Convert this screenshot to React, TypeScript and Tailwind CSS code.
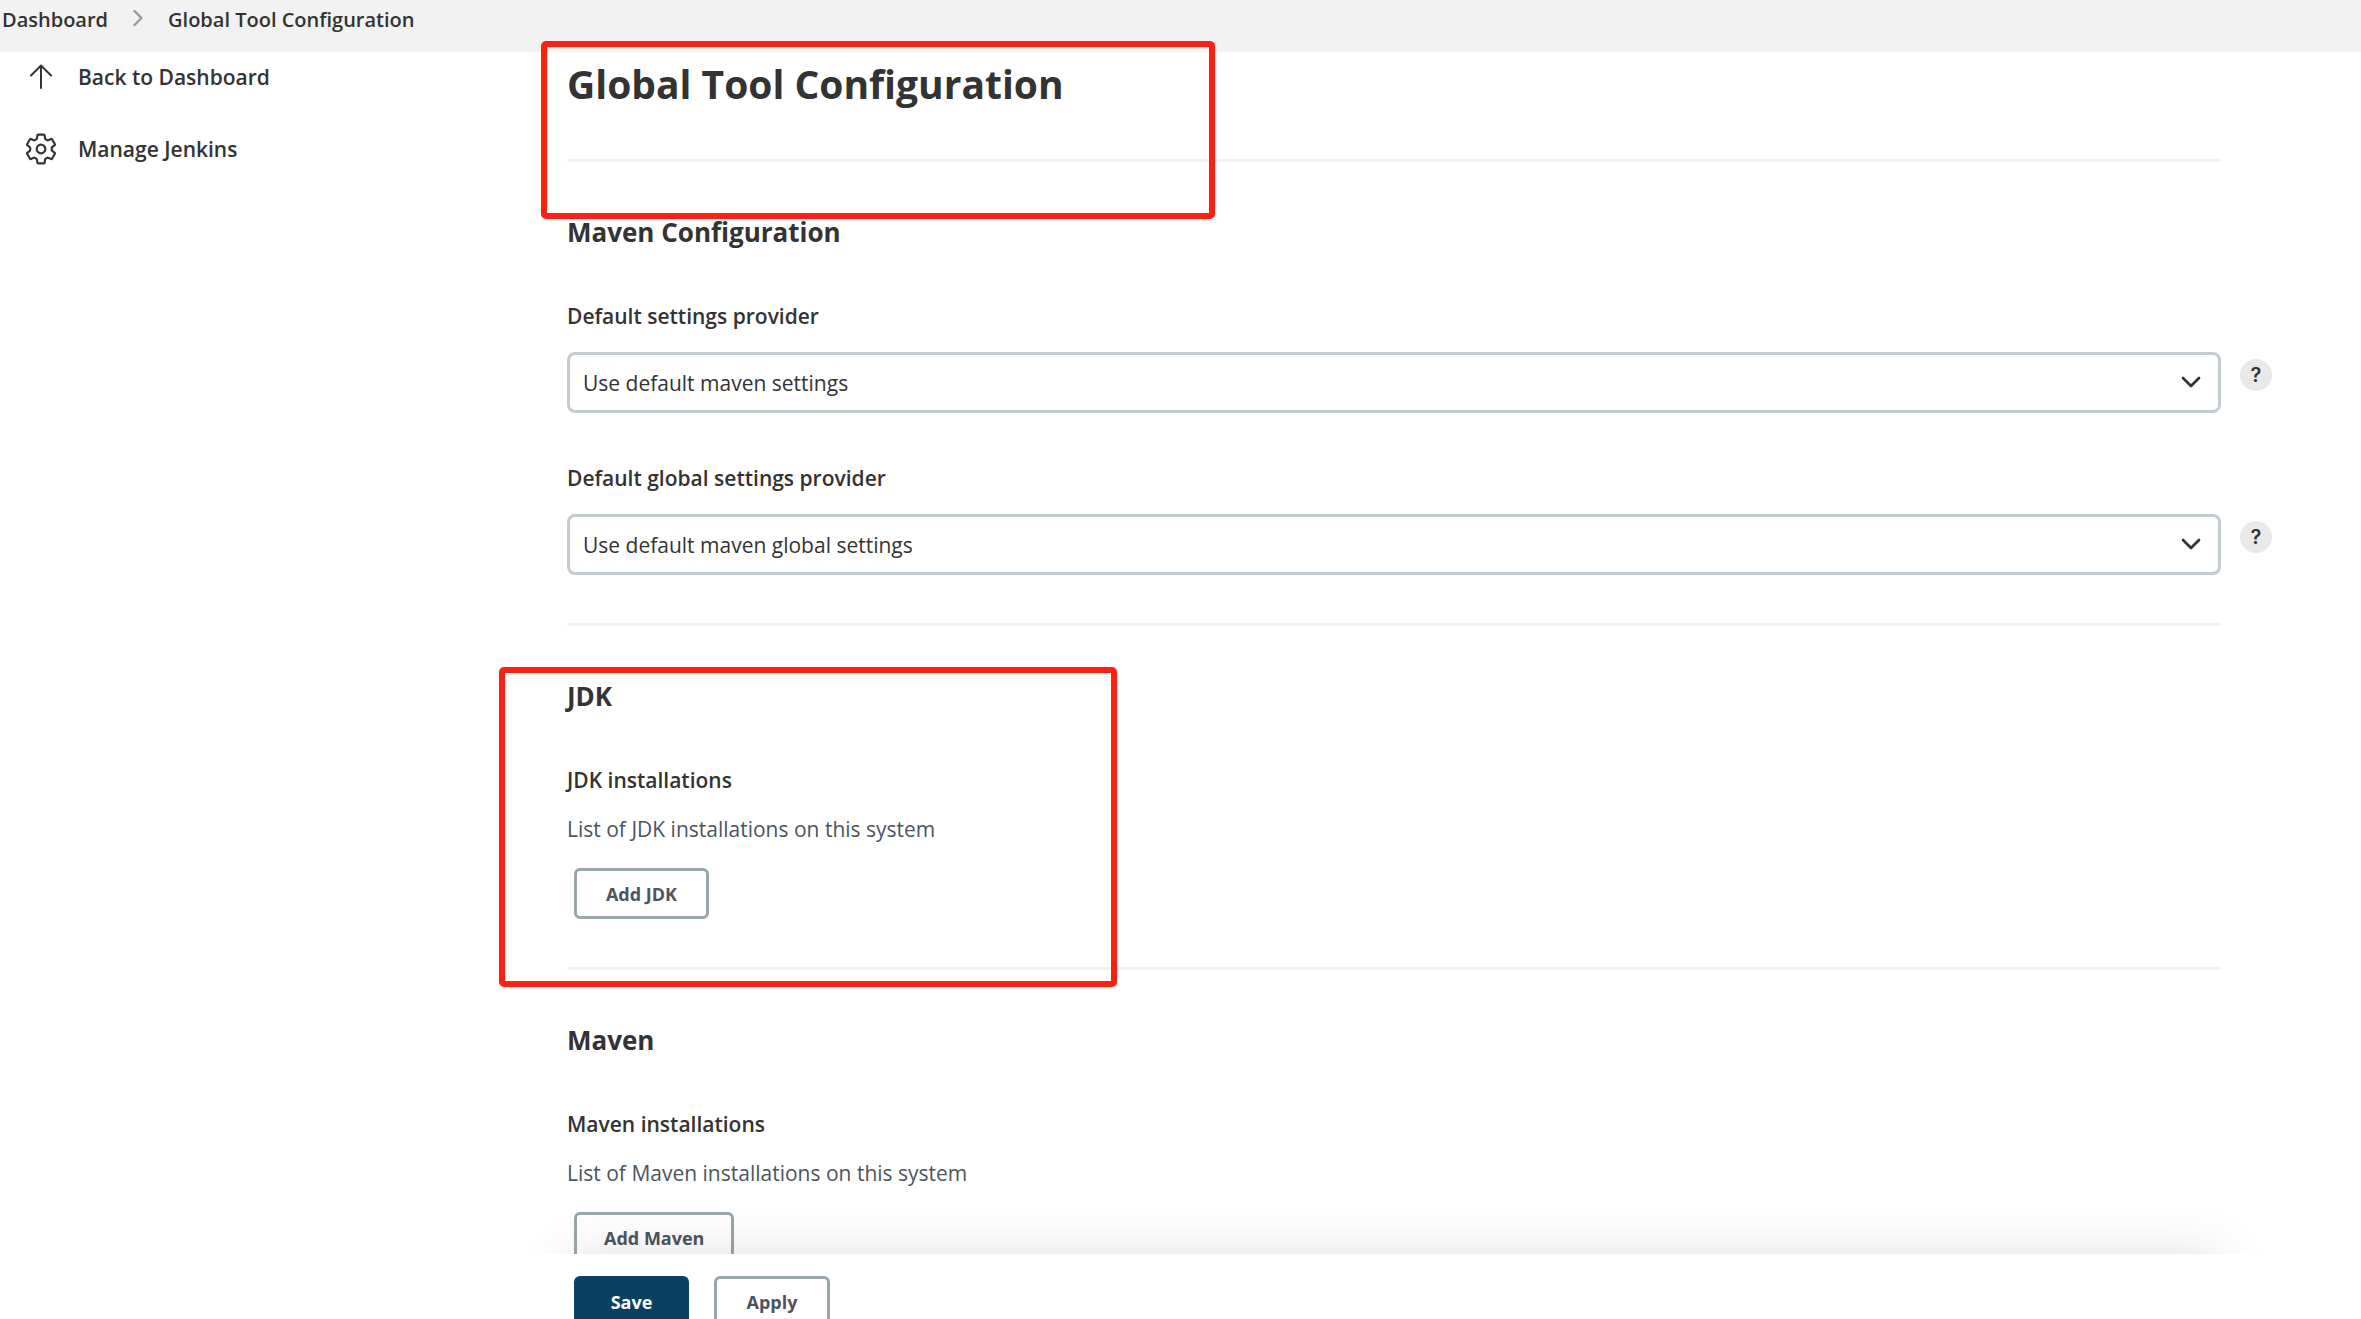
import type { ReactNode } from 'react';
import { ChevronDown, ChevronRight } from 'lucide-react';

type ProviderFieldProps = {
  id: string;
  label: string;
  options: string[];
};

function ArrowUpIcon() {
  return (
    <svg className="h-8 w-8 flex-shrink-0" viewBox="0 0 32 32" fill="none" stroke="currentColor" strokeWidth={2} strokeLinecap="round" strokeLinejoin="round">
      <path d="M16 27V5M6 14.5L16 4.5l10 10" />
    </svg>
  );
}

function GearIcon() {
  return (
    <svg className="h-8 w-8 flex-shrink-0" viewBox="18 18 476 476" fill="none" stroke="currentColor" strokeWidth={32} strokeLinecap="round" strokeLinejoin="round">
      <path d="M262.29 192.31a64 64 0 1057.4 57.4 64.13 64.13 0 00-57.4-57.4zM416.39 256a154.34 154.34 0 01-1.53 20.79l45.21 35.46a10.81 10.81 0 012.45 13.75l-42.77 74a10.81 10.81 0 01-13.14 4.59l-44.9-18.08a16.11 16.11 0 00-15.17 1.75A164.48 164.48 0 01325 400.8a15.94 15.94 0 00-8.82 12.14l-6.73 47.89a11.08 11.08 0 01-10.68 9.17h-85.54a11.11 11.11 0 01-10.69-8.87l-6.72-47.82a16.07 16.07 0 00-9-12.22 155.3 155.3 0 01-21.46-12.57 16 16 0 00-15.11-1.71l-44.89 18.07a10.81 10.81 0 01-13.14-4.58l-42.77-74a10.8 10.8 0 012.45-13.75l38.21-30a16.05 16.05 0 006-14.08c-.36-4.17-.58-8.33-.58-12.5s.21-8.27.58-12.35a16 16 0 00-6.07-13.94l-38.19-30A10.81 10.81 0 0149.48 186l42.77-74a10.81 10.81 0 0113.14-4.59l44.9 18.08a16.11 16.11 0 0015.17-1.75A164.48 164.48 0 01187 111.2a15.94 15.94 0 008.82-12.14l6.73-47.89A11.08 11.08 0 01213.23 42h85.54a11.11 11.11 0 0110.69 8.87l6.72 47.82a16.07 16.07 0 009 12.22 155.3 155.3 0 0121.46 12.57 16 16 0 0015.11 1.71l44.89-18.07a10.81 10.81 0 0113.14 4.58l42.77 74a10.8 10.8 0 01-2.45 13.75l-38.21 30a16.05 16.05 0 00-6.05 14.08c.33 4.14.55 8.3.55 12.47z" />
    </svg>
  );
}

function SectionTitle({ children }: { children: ReactNode }) {
  return <h2 className="mt-[54px] text-[26px] leading-8 font-bold">{children}</h2>;
}

function Divider() {
  return <hr className="mt-12 h-[3px] border-0 bg-[#f2f2f2]" />;
}

function ProviderField({ id, label, options }: ProviderFieldProps) {
  return (
    <div>
      <label htmlFor={id} className="block text-[21px] leading-8 font-semibold">{label}</label>
      <div className="mt-5 -mr-[51px] flex gap-[19px]">
        <div className="relative flex-1">
          <select
            id={id}
            className="h-[61px] w-full appearance-none rounded-lg border-3 border-[#c3ccd1] bg-white px-[13px] pt-[2px] text-[21px]"
          >
            {options.map((o) => (
              <option key={o}>{o}</option>
            ))}
          </select>
          <ChevronDown className="pointer-events-none absolute top-[14px] right-[14px] h-8 w-8" strokeWidth={2} />
        </div>
        <button
          type="button"
          aria-label={`Help for feature: ${label}`}
          className="mt-[7px] h-8 w-8 rounded-full bg-[#e9e9e9] font-['Inter','Open_Sans',sans-serif] text-xl leading-8 font-semibold"
        >
          ?
        </button>
      </div>
    </div>
  );
}

function InstallationSection({ tool }: { tool: string }) {
  return (
    <section>
      <SectionTitle>{tool}</SectionTitle>
      <h3 className="mt-[52px] text-[21px] leading-8 font-semibold">{tool} installations</h3>
      <p className="mt-[17px] text-[21px] leading-8 text-[#4d545d]">List of {tool} installations on this system</p>
      <button
        type="button"
        className="mt-[23px] ml-[7px] h-[51px] min-w-[135px] rounded-md border-3 border-[#9aa6ae] px-[27px] text-lg font-bold text-[#4d545d]"
      >
        Add {tool}
      </button>
    </section>
  );
}

export default function App() {
  return (
    <div className="relative flex h-screen flex-col overflow-hidden bg-white font-['Open_Sans','Noto_Sans',sans-serif] text-[#333]">
      <nav aria-label="Breadcrumb" className="flex h-[52px] flex-shrink-0 items-start gap-4 bg-[#f2f2f2] pt-1 pl-[2px] text-xl leading-8 font-semibold">
        <a href="#dashboard">Dashboard</a>
        <ChevronRight className="h-7 w-7 text-[#999]" strokeWidth={2} />
        <a href="#tools">Global Tool Configuration</a>
      </nav>

      <div className="relative flex min-h-0 flex-1 overflow-hidden">
        <aside className="w-[567px] flex-shrink-0 pt-[9px] pl-[25px] text-[21px] leading-8 font-semibold">
          <a href="#dashboard" className="flex items-center gap-[21px]">
            <ArrowUpIcon />
            Back to Dashboard
          </a>
          <a href="#manage" className="mt-10 flex items-center gap-[21px]">
            <GearIcon />
            Manage Jenkins
          </a>
        </aside>

        <main className="min-w-0 flex-1 pt-2 pr-[140px]">
          <h1 className="pb-1 text-[39px] leading-[47px] font-bold">Global Tool Configuration</h1>
          <Divider />

          <section>
            <SectionTitle>Maven Configuration</SectionTitle>
            <div className="mt-[52px] space-y-[49px]">
              <ProviderField
                id="settings-provider"
                label="Default settings provider"
                options={['Use default maven settings', 'Settings file in filesystem']}
              />
              <ProviderField
                id="global-settings-provider"
                label="Default global settings provider"
                options={['Use default maven global settings', 'Global settings file on filesystem']}
              />
            </div>
          </section>
          <Divider />

          <InstallationSection tool="JDK" />
          <Divider />

          <InstallationSection tool="Maven" />
        </main>

        {/* shadow cast upwards by the action bar */}
        <div className="pointer-events-none absolute top-full right-[140px] left-[567px] h-24 shadow-[0_0_55px_rgba(0,0,0,0.12)]" />
      </div>

      <div className="flex h-[65px] flex-shrink-0 items-start gap-[25px] bg-white pt-[22px] pl-[574px]">
        <button type="submit" className="h-[51px] w-[115px] flex-shrink-0 rounded-md bg-[#0b4062] text-lg font-bold text-white">
          Save
        </button>
        <button type="button" className="h-[51px] w-[116px] flex-shrink-0 rounded-md border-3 border-[#9aa6ae] text-lg font-bold text-[#4d545d]">
          Apply
        </button>
      </div>

      {/* highlight frames */}
      <div className="pointer-events-none absolute top-[41px] left-[541px] h-[178px] w-[674px] rounded-[5px] border-6 border-[#ff1f11]" />
      <div className="pointer-events-none absolute top-[667px] left-[499px] h-[320px] w-[618px] rounded-[5px] border-6 border-[#ff1f11]" />
    </div>
  );
}
